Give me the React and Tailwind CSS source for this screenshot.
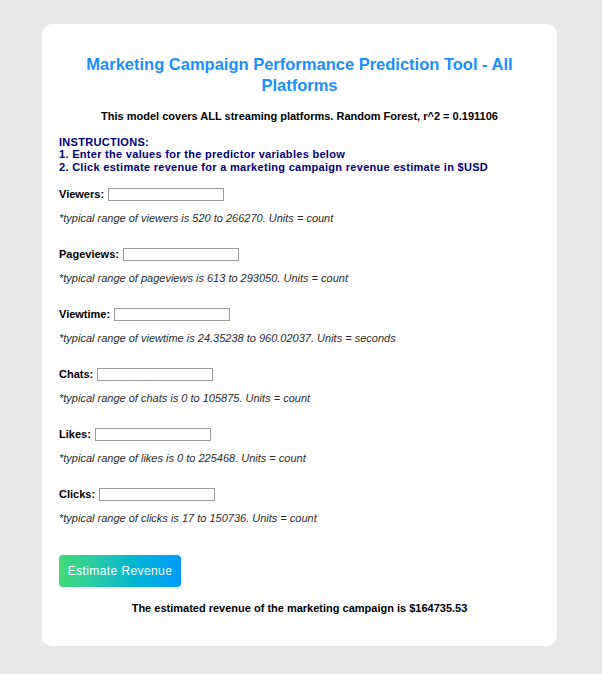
import React, { useState } from "react";

const fields = [
  { name: "Viewers", key: "viewers", range: "520 to 266270", units: "count" },
  { name: "Pageviews", key: "pageviews", range: "613 to 293050", units: "count" },
  { name: "Viewtime", key: "viewtime", range: "24.35238 to 960.02037", units: "seconds" },
  { name: "Chats", key: "chats", range: "0 to 105875", units: "count" },
  { name: "Likes", key: "likes", range: "0 to 225468", units: "count" },
  { name: "Clicks", key: "clicks", range: "17 to 150736", units: "count" },
];

const Field = ({ field, value, onChange }) => (
  <div className="mb-[22px]">
    <div className="flex items-center h-[14px] mt-[3px]">
      <label className="font-bold text-[11px] text-black mr-1">{field.name}:</label>
      <input
        type="text"
        value={value}
        onChange={(e) => onChange(field.key, e.target.value)}
        className="w-[116px] h-[13px] border border-[#9a9a9a] bg-white outline-none"
      />
    </div>
    <p className="italic text-[11px] text-[#2b2b2b] mt-[10px] leading-[14px]">
      *typical range of {field.key} is {field.range}. Units = {field.units}
    </p>
  </div>
);

export default function App() {
  const [values, setValues] = useState({});

  const changeValue = (key, value) => {
    setValues((prev) => ({ ...prev, [key]: value }));
  };

  return (
    <div
      className="w-full min-h-[674px] bg-[#e8e8e8] pt-[24px] pb-[28px]"
      style={{ fontFamily: '"Liberation Sans", Arial, sans-serif' }}
    >
      <div className="ml-[42px] w-[515px] h-[622px] bg-white rounded-[10px] px-[17px] pt-[30px]">
        <h1 className="text-center text-[16.5px] font-bold leading-[21px] text-[#1a8fff] px-[20px]">
          Marketing Campaign Performance Prediction Tool - All Platforms
        </h1>
        <p className="text-center font-bold text-[11px] text-black mt-[12px]">
          This model covers ALL streaming platforms. Random Forest, r^2 = 0.191106
        </p>
        <div className="mt-[11px] font-bold text-[11px] leading-[12.5px] text-[#000080] tracking-[0.3px]">
          <p>INSTRUCTIONS:</p>
          <p>1. Enter the values for the predictor variables below</p>
          <p>2. Click estimate revenue for a marketing campaign revenue estimate in $USD</p>
        </div>
        <div className="mt-[14px]">
          {fields.map((f) => (
            <Field key={f.key} field={f} value={values[f.key] || ""} onChange={changeValue} />
          ))}
        </div>
        <button className="mt-[8px] w-[122px] h-[32px] rounded-[4px] bg-gradient-to-r from-[#43da73] to-[#0099ff] text-white text-[12px] tracking-[0.4px]">
          Estimate Revenue
        </button>
        <p className="text-center font-bold text-[11px] text-black mt-[13px]">
          The estimated revenue of the marketing campaign is $164735.53
        </p>
      </div>
    </div>
  );
}
